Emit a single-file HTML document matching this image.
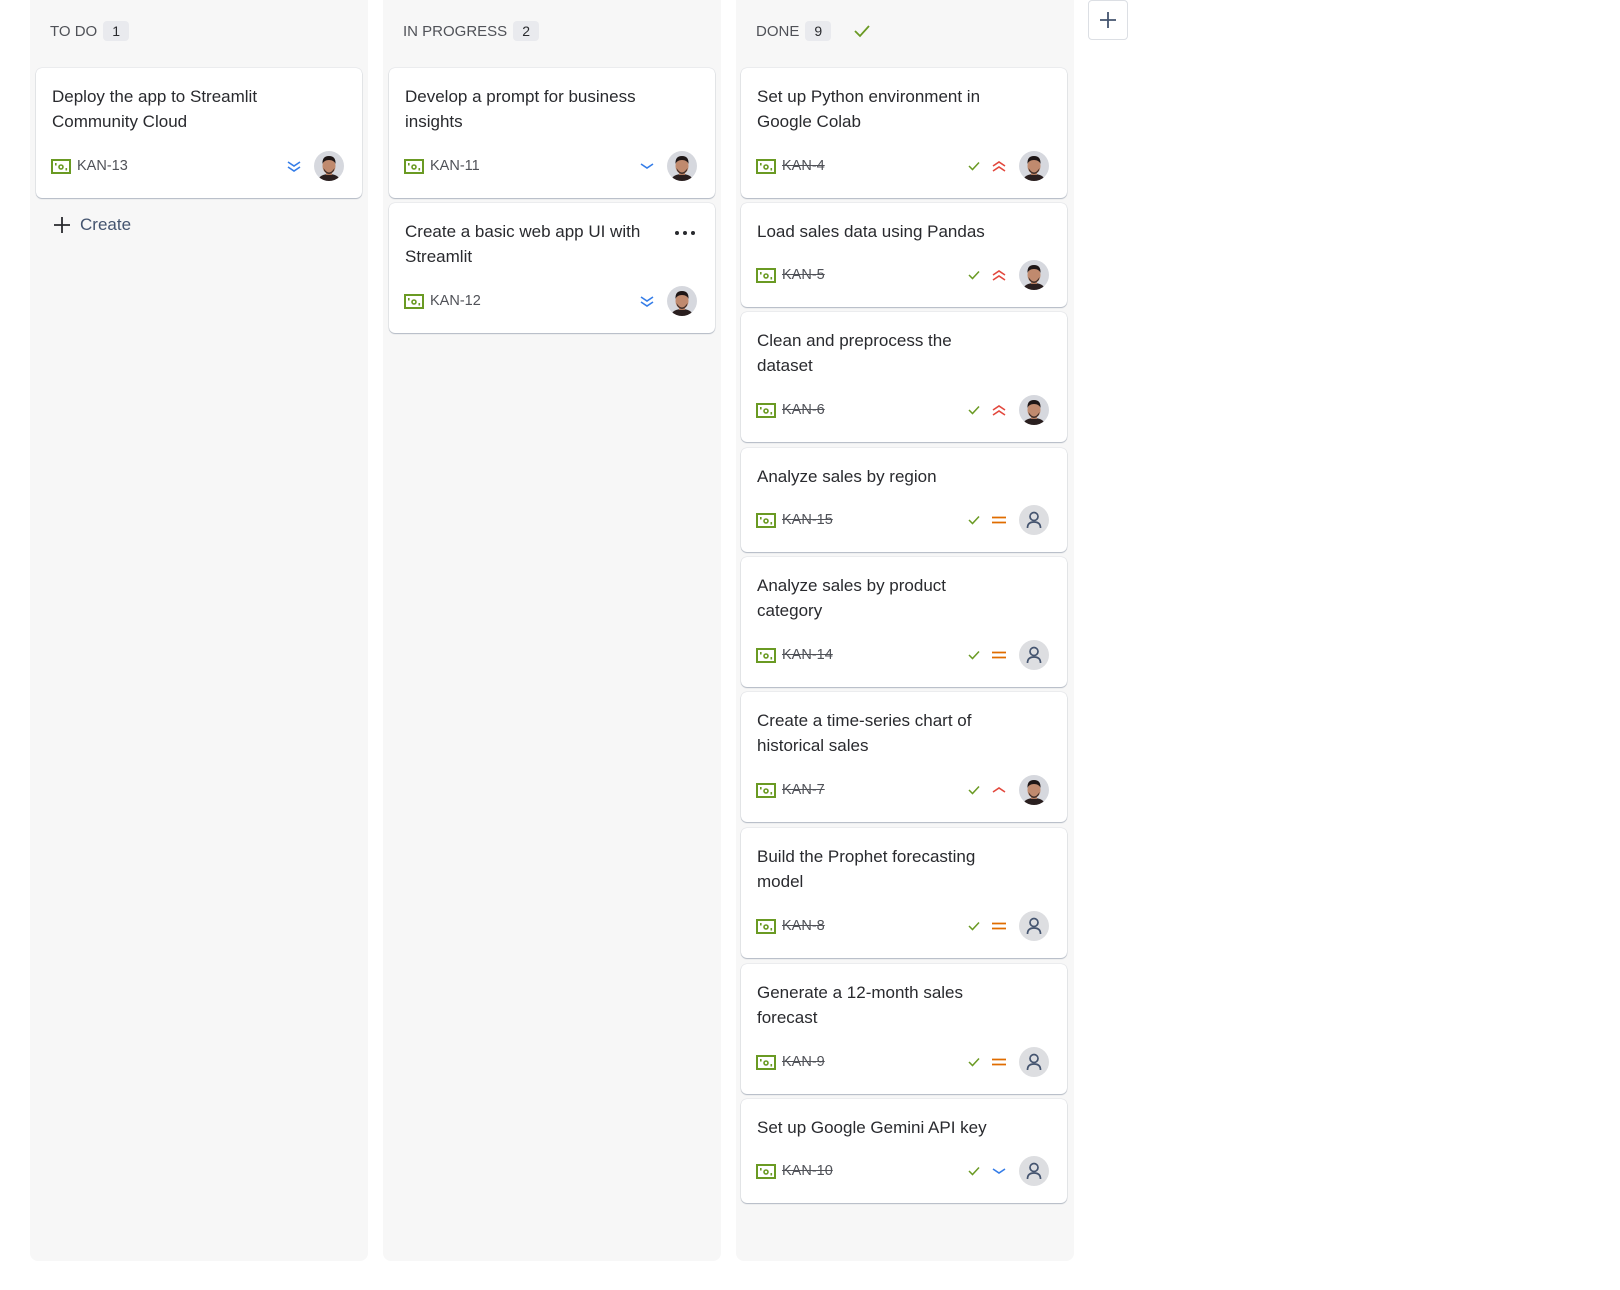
<!DOCTYPE html>
<html><head><meta charset="utf-8"><style>
*{box-sizing:border-box;margin:0;padding:0}
body{width:1620px;height:1290px;background:#fff;font-family:"Liberation Sans",sans-serif;position:relative;overflow:hidden;color:#292a2e}
.col{position:absolute;top:0;width:338px;height:1261px;background:#f7f7f7;border-radius:0 0 8px 8px}
.hdr{position:absolute;top:21px;left:20px;height:20px;display:flex;align-items:center;font-size:15px;color:#505258}
.badge{background:#e9eaee;border-radius:4px;padding:0 9px;height:20px;line-height:20px;margin-left:6px;color:#292a2e;font-size:14px}
.card{position:absolute;width:326px;background:#fff;border-radius:6px;box-shadow:0 1px 1px rgba(9,30,66,.25),0 0 1px rgba(9,30,66,.31)}
.t{position:absolute;left:16px;top:16px;width:250px;font-size:17px;line-height:25px;color:#292a2e}
.ft{position:absolute;left:15px;right:18px;bottom:17px;height:30px;display:flex;align-items:center}
.key{font-size:14.5px;color:#505258;margin-left:6px}
.done .key{text-decoration:line-through}
.sp{flex:1}
.av{width:30px;height:30px;border-radius:50%;overflow:hidden;margin-left:12px;flex:none}
.ic{flex:none;display:block}
</style></head><body>
<svg width="0" height="0" style="position:absolute">
<defs>
<symbol id="story" viewBox="0 0 20 15"><rect x="1" y="1" width="18" height="13" fill="none" stroke="#6a9a23" stroke-width="2"/><rect x="4" y="4" width="1.6" height="2.5" fill="#6a9a23"/><circle cx="10" cy="8" r="2" fill="none" stroke="#6a9a23" stroke-width="1.6"/><rect x="14.5" y="9" width="1.6" height="2.5" fill="#6a9a23"/></symbol>
<symbol id="face" viewBox="0 0 30 30"><rect width="30" height="30" fill="#d6d8de"/><path d="M3 30 Q6 23 15 23 Q24 23 27 30Z" fill="#2a1f1f"/><rect x="12" y="18" width="6" height="6" fill="#b07a5e"/><ellipse cx="15" cy="15" rx="6.5" ry="8" fill="#c08a6e"/><path d="M8.5 13 Q8 5 15 5 Q22 5 21.5 13 Q20 9 15 9 Q10 9 8.5 13Z" fill="#1e1616"/><path d="M9.5 17 Q15 26 20.5 17 Q20 22 15 23 Q10 22 9.5 17Z" fill="#3a2a26"/></symbol>
<symbol id="user" viewBox="0 0 30 30"><rect width="30" height="30" fill="#dddee1"/><circle cx="15" cy="11.5" r="4" fill="none" stroke="#44546f" stroke-width="1.7"/><path d="M8.5 23 Q8.5 17 15 17 Q21.5 17 21.5 23" fill="none" stroke="#44546f" stroke-width="1.7"/></symbol>
</defs></svg>

<div class="col" style="left:30px"><div class="hdr">TO DO<span class="badge">1</span></div></div>
<div class="col" style="left:383px"><div class="hdr">IN PROGRESS<span class="badge">2</span></div></div>
<div class="col" style="left:736px"><div class="hdr">DONE<span class="badge">9</span><svg style="margin-left:22px" width="18" height="14" viewBox="0 0 18 14"><path d="M2 7 L7 12 L16 2" fill="none" stroke="#6a9a23" stroke-width="1.8"/></svg></div></div>

<div style="position:absolute;left:1088px;top:0;width:40px;height:40px;border:1px solid #dcdfe4;border-radius:4px;background:#fff"><svg width="38" height="38" viewBox="0 0 38 38"><path d="M19 11V27M11 19H27" stroke="#44546f" stroke-width="1.8"/></svg></div>

<!-- TODO -->
<div class="card" style="left:36px;top:68px;height:130px"><div class="t">Deploy the app to Streamlit Community Cloud</div>
<div class="ft"><svg class="ic" width="20" height="15"><use href="#story"/></svg><span class="key">KAN-13</span><span class="sp"></span>
<svg class="ic" width="16" height="16" viewBox="0 0 16 16"><path d="M2 4L8 8L14 4M2 9L8 13L14 9" fill="none" stroke="#357de8" stroke-width="1.6"/></svg>
<svg class="av" width="30" height="30"><use href="#face"/></svg></div></div>
<div style="position:absolute;left:52px;top:215px;display:flex;align-items:center;font-size:17px;color:#44546f"><svg width="20" height="20" viewBox="0 0 20 20"><path d="M10 2V18M2 10H18" stroke="#292a2e" stroke-width="1.8"/></svg><span style="margin-left:8px">Create</span></div>

<!-- IN PROGRESS -->
<div class="card" style="left:389px;top:68px;height:130px"><div class="t">Develop a prompt for business insights</div>
<div class="ft"><svg class="ic" width="20" height="15"><use href="#story"/></svg><span class="key">KAN-11</span><span class="sp"></span>
<svg class="ic" width="16" height="16" viewBox="0 0 16 16"><path d="M2 6L8 10L14 6" fill="none" stroke="#357de8" stroke-width="1.6"/></svg>
<svg class="av" width="30" height="30"><use href="#face"/></svg></div></div>
<div class="card" style="left:389px;top:203px;height:130px"><div class="t">Create a basic web app UI with Streamlit</div>
<div style="position:absolute;right:20px;top:28px;width:20px;display:flex;justify-content:space-between"><i style="width:4px;height:4px;border-radius:50%;background:#292a2e"></i><i style="width:4px;height:4px;border-radius:50%;background:#292a2e"></i><i style="width:4px;height:4px;border-radius:50%;background:#292a2e"></i></div>
<div class="ft"><svg class="ic" width="20" height="15"><use href="#story"/></svg><span class="key">KAN-12</span><span class="sp"></span>
<svg class="ic" width="16" height="16" viewBox="0 0 16 16"><path d="M2 4L8 8L14 4M2 9L8 13L14 9" fill="none" stroke="#357de8" stroke-width="1.6"/></svg>
<svg class="av" width="30" height="30"><use href="#face"/></svg></div></div>

<!-- DONE -->
<div class="done">
<div class="card" style="left:741px;top:68px;height:130px"><div class="t">Set up Python environment in Google Colab</div>
<div class="ft"><svg class="ic" width="20" height="15"><use href="#story"/></svg><span class="key">KAN-4</span><span class="sp"></span>
<svg class="ic" width="14" height="12" viewBox="0 0 14 12"><path d="M2 6L5.5 9.5L12 2.5" fill="none" stroke="#6a9a23" stroke-width="1.5"/></svg><svg class="ic" style="margin-left:10px" width="16" height="16" viewBox="0 0 16 16"><path d="M2 8L8 4L14 8M2 13L8 9L14 13" fill="none" stroke="#e2483d" stroke-width="1.6"/></svg>
<svg class="av" width="30" height="30"><use href="#face"/></svg></div></div>

<div class="card" style="left:741px;top:203px;height:104px"><div class="t">Load sales data using Pandas</div>
<div class="ft"><svg class="ic" width="20" height="15"><use href="#story"/></svg><span class="key">KAN-5</span><span class="sp"></span>
<svg class="ic" width="14" height="12" viewBox="0 0 14 12"><path d="M2 6L5.5 9.5L12 2.5" fill="none" stroke="#6a9a23" stroke-width="1.5"/></svg><svg class="ic" style="margin-left:10px" width="16" height="16" viewBox="0 0 16 16"><path d="M2 8L8 4L14 8M2 13L8 9L14 13" fill="none" stroke="#e2483d" stroke-width="1.6"/></svg>
<svg class="av" width="30" height="30"><use href="#face"/></svg></div></div>

<div class="card" style="left:741px;top:312px;height:130px"><div class="t">Clean and preprocess the dataset</div>
<div class="ft"><svg class="ic" width="20" height="15"><use href="#story"/></svg><span class="key">KAN-6</span><span class="sp"></span>
<svg class="ic" width="14" height="12" viewBox="0 0 14 12"><path d="M2 6L5.5 9.5L12 2.5" fill="none" stroke="#6a9a23" stroke-width="1.5"/></svg><svg class="ic" style="margin-left:10px" width="16" height="16" viewBox="0 0 16 16"><path d="M2 8L8 4L14 8M2 13L8 9L14 13" fill="none" stroke="#e2483d" stroke-width="1.6"/></svg>
<svg class="av" width="30" height="30"><use href="#face"/></svg></div></div>

<div class="card" style="left:741px;top:448px;height:104px"><div class="t">Analyze sales by region</div>
<div class="ft"><svg class="ic" width="20" height="15"><use href="#story"/></svg><span class="key">KAN-15</span><span class="sp"></span>
<svg class="ic" width="14" height="12" viewBox="0 0 14 12"><path d="M2 6L5.5 9.5L12 2.5" fill="none" stroke="#6a9a23" stroke-width="1.5"/></svg><svg class="ic" style="margin-left:10px" width="16" height="16" viewBox="0 0 16 16"><path d="M1 5.5H15M1 10.5H15" fill="none" stroke="#e06c00" stroke-width="1.8"/></svg>
<svg class="av" width="30" height="30"><use href="#user"/></svg></div></div>

<div class="card" style="left:741px;top:557px;height:130px"><div class="t">Analyze sales by product category</div>
<div class="ft"><svg class="ic" width="20" height="15"><use href="#story"/></svg><span class="key">KAN-14</span><span class="sp"></span>
<svg class="ic" width="14" height="12" viewBox="0 0 14 12"><path d="M2 6L5.5 9.5L12 2.5" fill="none" stroke="#6a9a23" stroke-width="1.5"/></svg><svg class="ic" style="margin-left:10px" width="16" height="16" viewBox="0 0 16 16"><path d="M1 5.5H15M1 10.5H15" fill="none" stroke="#e06c00" stroke-width="1.8"/></svg>
<svg class="av" width="30" height="30"><use href="#user"/></svg></div></div>

<div class="card" style="left:741px;top:692px;height:130px"><div class="t">Create a time-series chart of historical sales</div>
<div class="ft"><svg class="ic" width="20" height="15"><use href="#story"/></svg><span class="key">KAN-7</span><span class="sp"></span>
<svg class="ic" width="14" height="12" viewBox="0 0 14 12"><path d="M2 6L5.5 9.5L12 2.5" fill="none" stroke="#6a9a23" stroke-width="1.5"/></svg><svg class="ic" style="margin-left:10px" width="16" height="16" viewBox="0 0 16 16"><path d="M2 10L8 6L14 10" fill="none" stroke="#e2483d" stroke-width="1.6"/></svg>
<svg class="av" width="30" height="30"><use href="#face"/></svg></div></div>

<div class="card" style="left:741px;top:828px;height:130px"><div class="t">Build the Prophet forecasting model</div>
<div class="ft"><svg class="ic" width="20" height="15"><use href="#story"/></svg><span class="key">KAN-8</span><span class="sp"></span>
<svg class="ic" width="14" height="12" viewBox="0 0 14 12"><path d="M2 6L5.5 9.5L12 2.5" fill="none" stroke="#6a9a23" stroke-width="1.5"/></svg><svg class="ic" style="margin-left:10px" width="16" height="16" viewBox="0 0 16 16"><path d="M1 5.5H15M1 10.5H15" fill="none" stroke="#e06c00" stroke-width="1.8"/></svg>
<svg class="av" width="30" height="30"><use href="#user"/></svg></div></div>

<div class="card" style="left:741px;top:964px;height:130px"><div class="t">Generate a 12-month sales forecast</div>
<div class="ft"><svg class="ic" width="20" height="15"><use href="#story"/></svg><span class="key">KAN-9</span><span class="sp"></span>
<svg class="ic" width="14" height="12" viewBox="0 0 14 12"><path d="M2 6L5.5 9.5L12 2.5" fill="none" stroke="#6a9a23" stroke-width="1.5"/></svg><svg class="ic" style="margin-left:10px" width="16" height="16" viewBox="0 0 16 16"><path d="M1 5.5H15M1 10.5H15" fill="none" stroke="#e06c00" stroke-width="1.8"/></svg>
<svg class="av" width="30" height="30"><use href="#user"/></svg></div></div>

<div class="card" style="left:741px;top:1099px;height:104px"><div class="t">Set up Google Gemini API key</div>
<div class="ft"><svg class="ic" width="20" height="15"><use href="#story"/></svg><span class="key">KAN-10</span><span class="sp"></span>
<svg class="ic" width="14" height="12" viewBox="0 0 14 12"><path d="M2 6L5.5 9.5L12 2.5" fill="none" stroke="#6a9a23" stroke-width="1.5"/></svg><svg class="ic" style="margin-left:10px" width="16" height="16" viewBox="0 0 16 16"><path d="M2 6L8 10L14 6" fill="none" stroke="#357de8" stroke-width="1.6"/></svg>
<svg class="av" width="30" height="30"><use href="#user"/></svg></div></div>
</div>
</body></html>
